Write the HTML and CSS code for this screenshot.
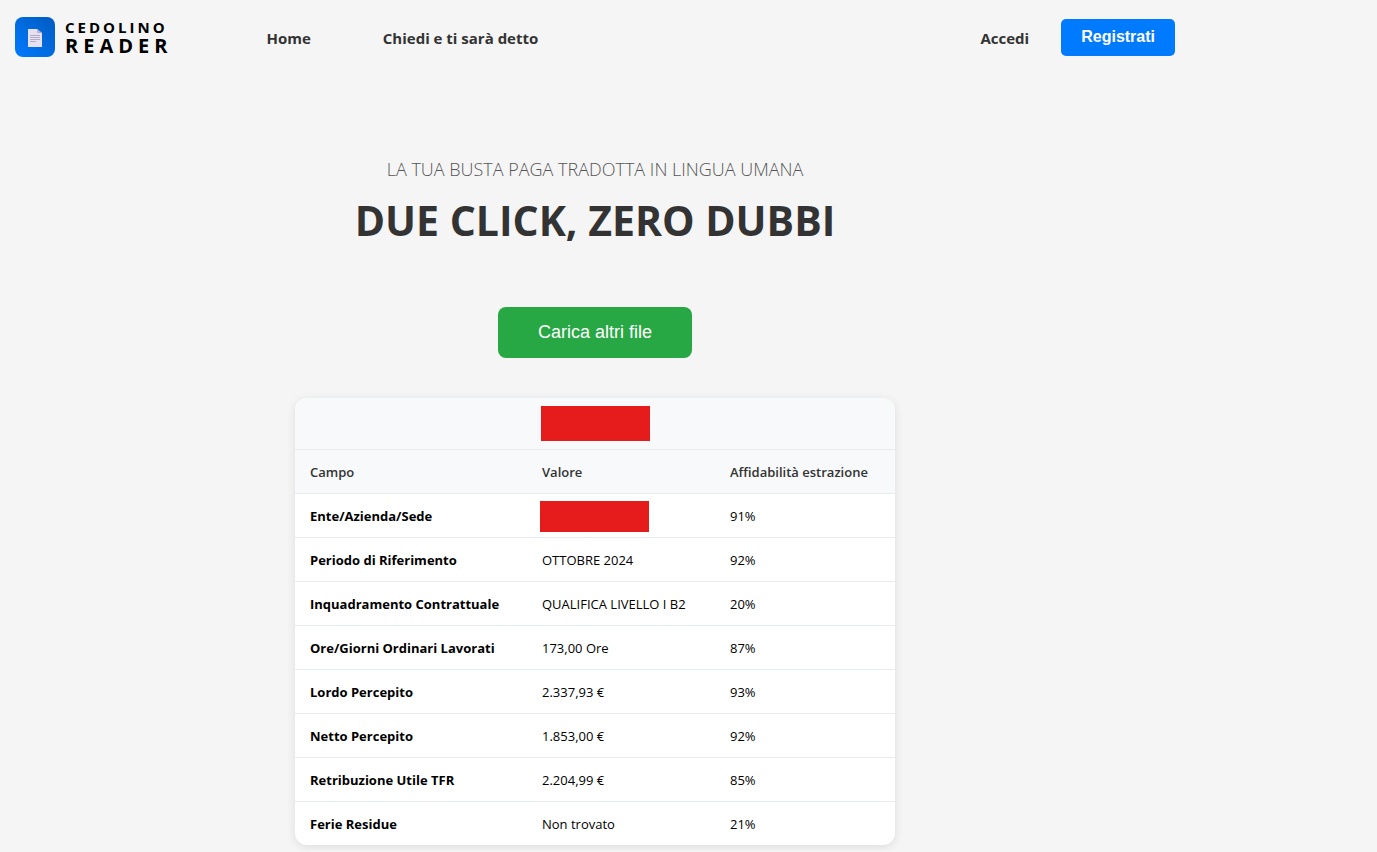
FILE: index.html
```html
<!DOCTYPE html>
<html lang="it">
<head>
  <meta charset="UTF-8">
  <meta name="viewport" content="width=device-width, initial-scale=1.0">
  <title>Cedolino Reader</title>
  <link rel="stylesheet" href="styles.css">
</head>
<body>

<div class="page">
  <!-- Header -->
  <header class="header">
    <a href="#" class="logo">
      <svg class="logo-icon" viewBox="0 0 40 40" aria-hidden="true">
        <defs>
          <linearGradient id="logo-bg" x1="0" y1="1" x2="1" y2="0">
            <stop offset="0" stop-color="#007bff"/>
            <stop offset="1" stop-color="#005ac0"/>
          </linearGradient>
        </defs>
        <rect width="40" height="40" rx="8" fill="url(#logo-bg)"/>
        <path d="M13 12h9l5 4v14H13z" fill="#e6e0f0"/>
        <path d="M22 12v4h5z" fill="#b9b0d0"/>
        <path d="M15 18.5h10M15 20.5h10M15 22.5h10M15 24.5h6" stroke="#a79fbd" stroke-width="0.8"/>
      </svg>
      <span class="logo-text">
        <span class="logo-top">CEDOLINO</span>
        <span class="logo-bottom">READER</span>
      </span>
    </a>
    <nav class="nav">
      <a href="#">Home</a>
      <a href="#">Chiedi e ti sarà detto</a>
    </nav>
    <div class="auth">
      <a href="#" class="login">Accedi</a>
      <button type="button" class="register-btn">Registrati</button>
    </div>
  </header>

  <main class="main">
    <p class="subtitle">LA TUA BUSTA PAGA TRADOTTA IN LINGUA UMANA</p>
    <h1 class="title">DUE CLICK, ZERO DUBBI</h1>
    <button type="button" class="upload-btn">Carica altri file</button>

    <!-- Risultati -->
    <table class="results">
      <thead>
        <tr class="file-row">
          <th colspan="3"><span class="redacted redacted-file"></span></th>
        </tr>
        <tr>
          <th class="col-field">Campo</th>
          <th class="col-value">Valore</th>
          <th class="col-score">Affidabilità estrazione</th>
        </tr>
      </thead>
      <tbody>
        <tr><td>Ente/Azienda/Sede</td><td class="hidden-value"><span class="redacted"></span></td><td>91%</td></tr>
        <tr><td>Periodo di Riferimento</td><td>OTTOBRE 2024</td><td>92%</td></tr>
        <tr><td>Inquadramento Contrattuale</td><td>QUALIFICA LIVELLO I B2</td><td>20%</td></tr>
        <tr><td>Ore/Giorni Ordinari Lavorati</td><td>173,00 Ore</td><td>87%</td></tr>
        <tr><td>Lordo Percepito</td><td>2.337,93 €</td><td>93%</td></tr>
        <tr><td>Netto Percepito</td><td>1.853,00 €</td><td>92%</td></tr>
        <tr><td>Retribuzione Utile TFR</td><td>2.204,99 €</td><td>85%</td></tr>
        <tr><td>Ferie Residue</td><td>Non trovato</td><td>21%</td></tr>
      </tbody>
    </table>
  </main>
</div>

</body>
</html>
```
FILE: styles.css
```css
* {
  box-sizing: border-box;
}

body {
  margin: 0;
  background: #f5f5f5;
  color: #333;
  font-family: "Segoe UI", "Open Sans", "Noto Sans", sans-serif;
}

a {
  color: inherit;
  text-decoration: none;
}

.page {
  max-width: 1190px;
}

.header {
  display: flex;
  align-items: center;
  padding: 17px 15px 16px;
}

.logo {
  display: flex;
  align-items: center;
  gap: 10px;
  color: #000;
  font-weight: bold;
}

.logo-icon {
  width: 40px;
  height: 40px;
}

.logo-text {
  display: flex;
  flex-direction: column;
}

.logo-top {
  font-size: 15px;
  line-height: 18px;
  letter-spacing: 3px;
}

.logo-bottom {
  font-size: 20px;
  line-height: 20px;
  letter-spacing: 5px;
}

.nav {
  display: flex;
  gap: 72px;
  margin-left: 94px;
  padding-top: 2px;
  font-size: 15px;
  font-weight: bold;
}

.auth {
  display: flex;
  align-items: center;
  gap: 32px;
  margin-left: auto;
  font-size: 15px;
  font-weight: bold;
}

.login {
  padding-top: 2px;
}

.register-btn {
  padding: 8px 20px 10px;
  background: #007bff;
  color: white;
  font-family: Arial, "Liberation Sans", sans-serif;
  font-size: 16px;
  font-weight: bold;
  line-height: 19px;
  border: none;
  border-radius: 5px;
  cursor: pointer;
}

.main {
  display: flex;
  flex-direction: column;
  align-items: center;
  padding: 83px 15px 6px;
}

.subtitle {
  margin: 0;
  color: #555;
  font-size: 18px;
  font-weight: 300;
  line-height: 26px;
}

.title {
  margin: 8px 0 57px;
  font-size: 41px;
  line-height: 60px;
}

.upload-btn {
  margin-bottom: 40px;
  padding: 15px 40px;
  background: #28a745;
  color: white;
  font-family: Arial, "Liberation Sans", sans-serif;
  font-size: 18px;
  line-height: 21px;
  border: none;
  border-radius: 8px;
  cursor: pointer;
}

.results {
  width: 100%;
  max-width: 600px;
  border-spacing: 0;
  background: white;
  color: #000;
  font-size: 13px;
  line-height: 19px;
  border-radius: 12px;
  overflow: hidden;
  box-shadow: 0 2px 10px rgba(0,0,0,0.1);
}

.results th,
.results td {
  padding: 13px 15px 11px;
  text-align: left;
  border-bottom: 1px solid #e9ecef;
}

.results th {
  background: #f8f9fa;
  color: #333;
  font-weight: 600;
}

.results tbody td:first-child {
  font-weight: bold;
}

.results tbody tr:last-child td {
  border-bottom: none;
}

.results .file-row th {
  padding: 8px 15px;
}

.col-field {
  width: 232px;
}

.col-value {
  width: 188px;
}

.redacted {
  display: block;
  width: 109px;
  height: 31px;
  background: #e61b1b;
}

.redacted-file {
  height: 35px;
  margin: 0 auto;
}

.results .hidden-value {
  padding: 7px 13px 5px;
}
```
